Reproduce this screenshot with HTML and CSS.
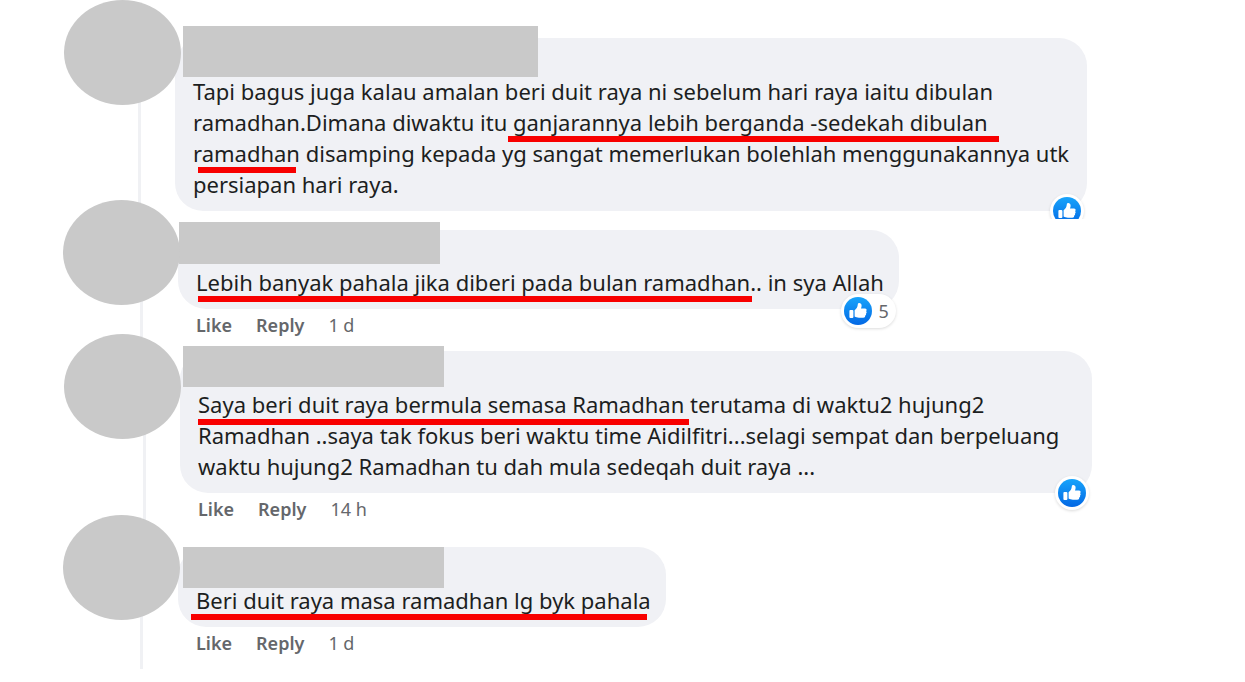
FILE: index.html
```html
<!DOCTYPE html>
<html lang="ms">
<head>
<meta charset="utf-8">
<meta name="viewport" content="width=device-width, initial-scale=1">
<title>Comments</title>
<link rel="stylesheet" href="styles.css">
</head>
<body>
<svg class="defs" aria-hidden="true">
  <defs>
    <linearGradient id="blue" x1="0" y1="0" x2="0" y2="1">
      <stop offset="0" stop-color="#18a4fb"/>
      <stop offset="1" stop-color="#0368e4"/>
    </linearGradient>
    <symbol id="like" viewBox="0 0 28 28">
      <circle cx="14" cy="14" r="14" fill="url(#blue)"/>
      <rect x="5.400" y="13" width="4" height="8" rx="1" fill="#fff"/>
      <path d="M10.600 13.200c2-1.300 3-3 3.200-5.600.1-1.200.8-1.700 1.700-1.500 1.800.3 2.400 1.900 2 3.600l-.5 1.900h3.800c1.900 0 2.400 1.800 1.300 2.600.8.700.7 1.900-.2 2.400.5.900.1 1.800-.8 2.200.3 1.200-.5 2-1.900 2h-4.300c-1.700 0-3-.5-4.300-1.200z" fill="#fff"/>
    </symbol>
  </defs>
</svg>
<main class="thread">
  <article class="comment comment-first">
    <div class="avatar"></div>
    <div class="body">
      <div class="bubble bubble-wide">
        <div class="name"></div>
        <p class="text">Tapi bagus juga kalau amalan beri duit raya ni sebelum hari raya iaitu dibulan<br>ramadhan.Dimana diwaktu itu <span class="mark mark-long">ganjarannya lebih berganda -sedekah dibulan</span><br><span class="mark mark-inset">ramadhan</span> disamping kepada yg sangat memerlukan bolehlah menggunakannya utk<br>persiapan hari raya.</p>
        <div class="reaction reaction-cut"><svg class="thumb" role="img" aria-label="Like"><use href="#like"/></svg></div>
      </div>
    </div>
  </article>
  <article class="comment comment-second">
    <div class="avatar"></div>
    <div class="body">
      <div class="bubble">
        <div class="name"></div>
        <p class="text"><span class="mark">Lebih banyak pahala jika diberi pada bulan ramadhan.</span>. in sya Allah</p>
        <div class="reaction reaction-count"><svg class="thumb" role="img" aria-label="Like"><use href="#like"/></svg><span>5</span></div>
      </div>
      <div class="actions"><button type="button">Like</button><button type="button">Reply</button><time>1 d</time></div>
    </div>
  </article>
  <article class="comment comment-third">
    <div class="avatar"></div>
    <div class="body">
      <div class="bubble bubble-wide">
        <div class="name"></div>
        <p class="text"><span class="mark mark-low">Saya beri duit raya bermula semasa Ramadhan</span> terutama di waktu2 hujung2<br>Ramadhan ..saya tak fokus beri waktu time Aidilfitri...selagi sempat dan berpeluang<br>waktu hujung2 Ramadhan tu dah mula sedeqah duit raya ...</p>
        <div class="reaction"><svg class="thumb" role="img" aria-label="Like"><use href="#like"/></svg></div>
      </div>
      <div class="actions"><button type="button">Like</button><button type="button">Reply</button><time>14 h</time></div>
    </div>
  </article>
  <article class="comment comment-fourth">
    <div class="avatar"></div>
    <div class="body">
      <div class="bubble">
        <div class="name"></div>
        <p class="text"><span class="mark mark-early">Beri duit raya masa ramadhan lg byk pahala</span></p>
      </div>
      <div class="actions"><button type="button">Like</button><button type="button">Reply</button><time>1 d</time></div>
    </div>
  </article>
</main>
</body>
</html>
```

FILE: styles.css
```css
* { box-sizing: border-box; }

body {
  margin: 0;
  background: #fff;
  color: #1c1e21;
  font-family: "Noto Sans", "Open Sans", sans-serif;
}

.defs { position: absolute; width: 0; height: 0; }

.thread { padding: 38px 32px 0 63px; }

.comment {
  position: relative;
  display: flex;
  align-items: flex-start;
}

/* thread connector behind the avatars */
.comment::before {
  content: "";
  position: absolute;
  top: 0;
  bottom: 0;
  left: 77px;
  width: 3px;
  background: #f0f1f4;
}

.comment-first { padding-left: 1px; padding-bottom: 19px; }
.comment-second { padding-bottom: 14px; }
.comment-third { padding-left: 1px; padding-bottom: 26px; }
.comment-fourth { padding-bottom: 14px; }
.comment-first::before { left: 75px; }
.comment-third::before { left: 80px; }

.avatar {
  position: relative;
  z-index: 1;
  flex: none;
  width: 117px;
  height: 105px;
  border-radius: 50%;
  background: #c9c9c9;
}
.comment-first .avatar { margin-top: -38px; }
.comment-second .avatar { margin-top: -30px; }
.comment-third .avatar { margin-top: -17px; }
.comment-fourth .avatar { margin-top: -32px; }

.body { flex: 1; min-width: 0; margin-left: -2px; }
.comment-first .body { margin-left: -6px; }
.comment-third .body { margin-left: -1px; }

.bubble {
  position: relative;
  width: fit-content;
  max-width: 100%;
  padding: 38px 15px 11px 18px;
  border-radius: 28px;
  background: #f0f1f5;
}
.bubble-wide { width: 912px; padding-right: 10px; }
.comment-second .bubble { padding-top: 37px; }

/* block covering the author's name */
.name {
  position: absolute;
  top: -5px;
  left: 3px;
  width: 261px;
  height: 41px;
  background: #c9c9c9;
}
.comment-first .name { top: -12px; left: 8px; width: 355px; height: 51px; }
.comment-second .name { top: -8px; left: 1px; height: 42px; }
.comment-fourth .name { top: 0; left: 5px; }

.text { margin: 0; font-size: 22px; line-height: 31px; }

.mark { position: relative; white-space: nowrap; }
.mark::after {
  content: "";
  position: absolute;
  left: 2px;
  right: 4px;
  bottom: -5px;
  height: 6px;
  background: #f80000;
}
.mark-long::after { left: -5px; right: -11px; }
.mark-inset::after { left: 5px; }
.mark-low::after { left: 0; right: -5px; bottom: -6px; }
.mark-early::after { left: -5px; }

.reaction {
  position: absolute;
  right: 3px;
  bottom: -17px;
  display: flex;
  align-items: center;
  gap: 7px;
  padding: 3px;
  border-radius: 17px;
  background: #fff;
  color: #65676b;
  font-size: 18px;
  line-height: 28px;
  box-shadow: 0 1px 3px rgba(0, 0, 0, 0.14);
}
.reaction-count { bottom: -19px; padding-right: 7px; }
.reaction-cut { clip-path: inset(-3px -3px 9px -3px); }
.thumb { display: block; width: 28px; height: 28px; }

.actions {
  display: flex;
  gap: 24px;
  padding: 4px 18px 0;
  color: #65676b;
  font-size: 18px;
  line-height: 24px;
}
.actions button {
  padding: 0;
  border: 0;
  background: none;
  color: inherit;
  font: inherit;
  font-weight: 600;
  cursor: pointer;
}
```
